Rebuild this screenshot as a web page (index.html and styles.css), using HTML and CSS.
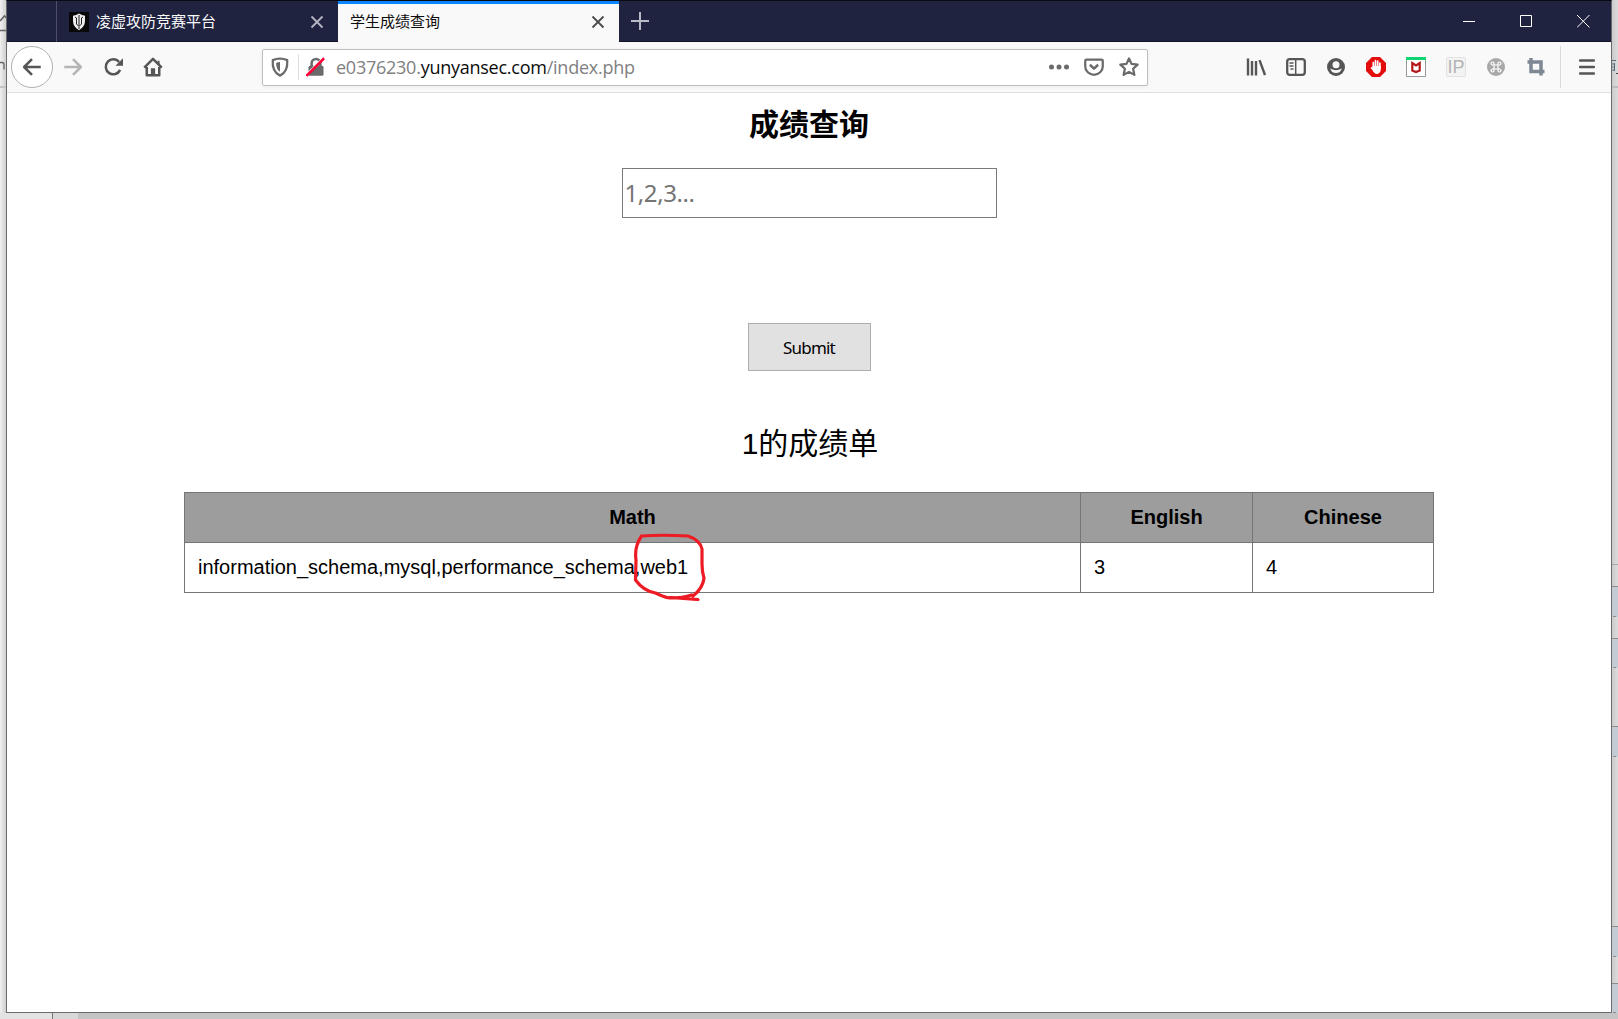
FILE: index.html
```html
<!DOCTYPE html>
<html lang="zh-CN">
<head>
    <meta charset="UTF-8">
    <meta name="viewport" content="width=device-width, initial-scale=1.0">
    <title>学生成绩查询</title>
    <link rel="stylesheet" href="styles.css">
</head>
<body>
    <!-- windows behind the browser -->
    <div class="behind behind-left">
        <svg width="6" height="100" viewBox="0 0 6 100">
            <path d="M0 21l4.500-5 2 2M0 30.500h6" stroke="#666" stroke-width="1.600" fill="none"/>
            <path d="M0 62.500h2q2 0 2 2v5" stroke="#666" stroke-width="1.300" fill="none"/>
            <path d="M0 87h6" stroke="#c4c4c8" stroke-width="2"/>
        </svg>
    </div>
    <div class="behind behind-right">
        <svg width="6" height="1013" viewBox="0 0 6 1013">
            <path d="M0 60.500h4M0 64h2M0 67h2M0 70h2M2.500 63v8" stroke="#5b6c7c" fill="none"/>
            <path d="M4 73.500h2" stroke="#444"/>
            <path d="M0 87h6" stroke="#bcbcc0" stroke-width="2"/>
            <path d="M0 587h6v30H0zM0 639h6v29H0zM0 727h6v30H0zM0 927h6v30H0zM0 984h6v29H0z" fill="#c3ccd5"/>
            <path d="M0 586.500h6M0 638.500h6M0 726.500h6M0 926.500h6M0 983.500h6" stroke="#8d8d8d"/>
            <path d="M1 616.500h3M1 667.500h3M1 756.500h3M1 956.500h3M1 1012.500h3" stroke="#8d8d8d"/>
            <path d="M0 564.500h6" stroke="#aaa"/>
        </svg>
    </div>
    <div class="behind behind-bottom"></div>

    <div class="window">
        <div class="titlebar">
            <div class="tab">
                <svg class="favicon" width="20" height="20" viewBox="0 0 20 20">
                    <path d="M0 0h20v20H0z" fill="#080808"/>
                    <path d="M10 1.500q3 2 6 2.200v5q0 6-6 9.500q-6-3.500-6-9.500v-5q3-.2 6-2.200z" fill="#eee"/>
                    <path d="M10 3v14M7.500 6v6l2 2M12.500 6v6l-2 2M6 5l2 1.500M14 5l-2 1.500" stroke="#222" fill="none"/>
                </svg>
                <span class="tab-title">凌虚攻防竞赛平台</span>
                <svg class="tab-close" width="14" height="14" viewBox="0 0 14 14"><path d="M1.500 1.500l11 11M12.500 1.500l-11 11"/></svg>
            </div>
            <div class="tab active">
                <span class="tab-title">学生成绩查询</span>
                <svg class="tab-close" width="14" height="14" viewBox="0 0 14 14"><path d="M1.500 1.500l11 11M12.500 1.500l-11 11"/></svg>
            </div>
            <svg class="new-tab" width="18" height="18" viewBox="0 0 18 18"><path d="M9 0v18M0 9h18"/></svg>
            <div class="window-controls">
                <svg width="13" height="13" viewBox="0 0 13 13"><path d="M0 6.500h12"/></svg>
                <svg width="13" height="13" viewBox="0 0 13 13"><path d="M.5.5h11v11H.5z"/></svg>
                <svg width="13" height="13" viewBox="0 0 13 13"><path d="M0 0l12.500 12.500M12.500 0L0 12.500"/></svg>
            </div>
        </div>

        <div class="toolbar">
            <div class="nav">
                <div class="back">
                    <svg class="icon" width="20" height="20" viewBox="0 0 16 16"><path d="M15 8H2M8 1.700L1.700 8 8 14.300"/></svg>
                </div>
                <svg class="icon disabled" width="20" height="20" viewBox="0 0 16 16"><path d="M1 8h13M8 1.700L14.300 8 8 14.300"/></svg>
                <svg class="icon" width="20" height="20" viewBox="0 0 16 16"><path d="M13.700 10.300A6 6 0 1 1 12.800 4"/><path class="fill" d="M16 1v6H10z"/></svg>
                <svg class="icon" width="20" height="20" viewBox="0 0 16 16"><path d="M1 8.500L8 1.500l7 7M3 8v6.500h10V8"/><path class="fill" d="M6.300 9h3.400v5.500H6.300z"/><path d="M12.500 3v3" stroke-width="1.500"/></svg>
            </div>

            <div class="urlbar">
                <svg class="icon" width="20" height="20" viewBox="0 0 16 16"><path d="M8 1.200q3 .3 5.800 1.300Q14.500 12 8 14.900 1.500 12 2.200 2.500 5 1.500 8 1.200z" stroke-width="1.800"/><path class="fill" d="M8 4q-1.700.2-3.100.7Q5 10 8 11.800z"/></svg>
                <span class="divider"></span>
                <svg class="icon" width="20" height="20" viewBox="0 0 16 16"><path d="M4.500 8V5a3.500 3.500 0 0 1 7 0v3"/><rect class="fill" x="2" y="7" width="12" height="8" rx="1.200"/><path d="M0 14.500L14 .5" stroke="#fff" stroke-width="1.500"/><path d="M.5 15L14.500 1" stroke="#ff0039" stroke-width="2"/></svg>
                <span class="url">e0376230.<b>yunyansec.com</b>/index.php</span>
                <div class="page-actions">
                    <svg class="icon" width="20" height="20" viewBox="0 0 20 20"><g class="fill"><circle cx="2.500" cy="10" r="2.500"/><circle cx="10" cy="10" r="2.500"/><circle cx="17.500" cy="10" r="2.500"/></g></svg>
                    <svg class="icon" width="20" height="20" viewBox="0 0 16 16"><path d="M2 2h12q1 0 1 1v4.500a7 6.700 0 0 1-14 0V3q0-1 1-1z" stroke-width="1.800"/><path d="M4.700 6.200L8 9.300l3.300-3.100" stroke-width="2"/></svg>
                    <svg class="icon" width="20" height="20" viewBox="0 0 16 16"><path d="M8 1.200l2 4.300 4.900.6-3.600 3.300 1 4.900L8 11.900l-4.300 2.400 1-4.900L1.100 6.100 6 5.500z" stroke-width="1.800"/></svg>
                </div>
            </div>

            <div class="extensions">
                <svg class="icon" width="20" height="20" viewBox="0 0 20 20"><path d="M2 1.500v17M6 4v14.500M10 4v14.500M13.500 3.200l5.500 14.800" stroke-width="2.400"/></svg>
                <svg class="icon" width="20" height="20" viewBox="0 0 20 20"><rect x="1.200" y="2.200" width="17.600" height="15.600" rx="2.500" stroke-width="2.300"/><path d="M9.700 2v16" stroke-width="1.500"/><path d="M3.500 6h4M3.500 9h4M4.500 12h3" stroke-width="1.300"/></svg>
                <svg class="icon" width="20" height="20" viewBox="0 0 20 20"><circle class="fill" cx="10" cy="10" r="9"/><circle cx="10" cy="7.800" r="3.500" fill="#f9f9fa" stroke="none"/><path d="M4.300 11.500Q10 15 15.700 11.500 14.500 16 10 16T4.300 11.500z" fill="#f9f9fa" stroke="none"/></svg>
                <svg width="20" height="20" viewBox="0 0 20 20"><path d="M6 0h8l6 6v8l-6 6H6l-6-6V6z" fill="#e40d0d"/><path d="M7.300 10V5.500M9.500 9V3.700M11.700 9V4.200M13.900 11V6M5.500 11l3 3" stroke="#fff" stroke-width="1.700" stroke-linecap="round"/><path d="M6.500 9h8.300v3q0 4-3.500 5-3 .2-4.800-4z" fill="#fff"/></svg>
                <svg width="20" height="20" viewBox="0 0 20 20"><path d="M.5.5h19v19H.5z" fill="#fff" stroke="#999"/><path d="M0 0h20v3H0z" fill="#0cd66d"/><path d="M6.300 6v7.500L10 15l3.700-1.500V6L10 8.500z" fill="none" stroke="#b5171b" stroke-width="2.200"/></svg>
                <span class="ext-ip">IP</span>
                <svg width="20" height="20" viewBox="0 0 20 20"><circle cx="10" cy="10" r="9" fill="#a8a8a8"/><path d="M8 8h4v4H8zM8 8H6.500A1.500 1.500 0 1 1 8 6.500zM12 8V6.500A1.500 1.500 0 1 1 13.500 8zM12 12h1.500a1.500 1.500 0 1 1-1.500 1.500zM8 12v1.500A1.500 1.500 0 1 1 6.500 12z" fill="none" stroke="#fff" stroke-width="1.200"/></svg>
                <svg width="20" height="20" viewBox="0 0 20 20"><path d="M5 1v13.500h13.500M1.500 5h13.500v13.500" fill="none" stroke="#7d8894" stroke-width="3.500"/></svg>
            </div>
            <div class="menu">
                <svg class="icon" width="16" height="16" viewBox="0 0 16 16"><path d="M1 1.500h14M1 8h14M1 14.500h14" stroke-width="2.300" stroke-linecap="round"/></svg>
            </div>
        </div>

        <div class="page">
            <h2>成绩查询</h2>
            <form class="query">
                <input type="text" name="id" placeholder="1,2,3...">
                <input type="submit" value="Submit">
            </form>
            <p class="caption">1的成绩单</p>
            <table>
                <tr>
                    <th class="math">Math</th>
                    <th class="english">English</th>
                    <th>Chinese</th>
                </tr>
                <tr>
                    <td>information_schema,mysql,performance_schema,<span class="marked">web1<svg class="pen" width="76" height="70" viewBox="0 0 76 70"><path d="M9.500 5Q30 3.500 56 5 68 9 70 18v15q0 8 2 14-1 10-11 18M9.500 5Q2 16 4 29L3.500 49q8 11 20 13 8 4 14 5 14 0 22-3M38 66.500l28 2"/></svg></span></td>
                    <td>3</td>
                    <td>4</td>
                </tr>
            </table>
        </div>
    </div>
</body>
</html>
```
FILE: styles.css
```css
* {
    box-sizing: border-box;
}

body {
    margin: 0;
    height: 1019px;
    display: grid;
    grid-template-columns: 6px 1606px 6px;
    grid-template-rows: 1013px 6px;
    overflow: hidden;
    background: #d8d8d8;
    font-family: "Liberation Sans", "Noto Sans CJK SC", sans-serif;
}

.behind-left {
    background: linear-gradient(90deg, #f0f0f0, #cfcfcf);
}

.behind-right {
    grid-column: 3;
    background: linear-gradient(90deg, #cbcbcb, #dcdcdc);
}

.behind svg {
    display: block;
}

.behind-bottom {
    grid-row: 2;
    grid-column: 1 / 4;
    background: linear-gradient(90deg, #e3e3e3 52px, #777 52px, #777 53px, #d8d8d8 53px, #d8d8d8 78px, #c4c4c4 78px);
}

.window {
    grid-row: 1;
    grid-column: 2;
    display: flex;
    flex-direction: column;
    border: 1px solid #6b6b6e;
    border-top-color: #0a0a14;
    background: #fff;
}

/* tabs */
.titlebar {
    height: 41px;
    padding-left: 49px;
    display: flex;
    background: #202340;
    box-shadow: inset 0 -1px #111326;
}

.tab {
    width: 282px;
    padding: 0 14px 0 12px;
    display: flex;
    align-items: center;
    border-left: 1px solid #4d4f66;
    color: #f9f9fa;
    font: 15px "Noto Sans CJK SC", sans-serif;
}

.tab.active {
    width: 281px;
    border-left: 0;
    border-top: 3px solid #0a84ff;
    padding-bottom: 3px;
    background: #f9f9fa;
    color: #0c0c0d;
}

.tab-title {
    margin-bottom: 2px;
}

.favicon {
    margin-right: 7px;
}

.tab-close {
    margin-left: auto;
    fill: none;
    stroke: #b5b6c2;
    stroke-width: 1.8;
}

.active .tab-close {
    stroke: #4a4a4b;
}

.new-tab {
    margin: 11px 0 0 12px;
    stroke: #b9bac5;
    stroke-width: 2;
}

.window-controls {
    margin: 14px 21px 0 auto;
    display: flex;
    gap: 44px;
}

.window-controls svg {
    fill: none;
    stroke: #fff;
}

/* toolbar */
.toolbar {
    height: 51px;
    display: flex;
    align-items: center;
    border-bottom: 1px solid #e0e0e1;
    background: #f9f9fa;
}

.icon {
    fill: none;
    stroke: #565657;
    stroke-width: 2;
    stroke-linejoin: round;
}

.icon .fill {
    fill: #565657;
    stroke: none;
}

.icon.disabled {
    stroke: #b5b5b6;
}

.nav {
    width: 255px;
    padding-left: 4px;
    display: flex;
    align-items: center;
    gap: 20px;
}

.back {
    width: 42px;
    height: 42px;
    margin-right: -10px;
    display: flex;
    align-items: center;
    justify-content: center;
    border: 1px solid #b1b1b2;
    border-radius: 50%;
    background: #fff;
}

.urlbar {
    width: 886px;
    height: 37px;
    padding: 0 8px 0 7px;
    display: flex;
    align-items: center;
    border: 1px solid #bebebf;
    border-radius: 2px;
    background: #fff;
    box-shadow: 0 1px 4px rgba(0, 0, 0, 0.05);
}

.urlbar .icon {
    stroke: #6a6a6b;
}

.urlbar .fill {
    fill: #6a6a6b;
}

.divider {
    width: 1px;
    height: 26px;
    margin: 0 7px 0 8px;
    background: #dededf;
}

.url {
    margin-left: 10px;
    color: #808081;
    font: 18px "Open Sans", sans-serif;
    letter-spacing: -0.25px;
}

.url b {
    color: #0c0c0d;
    font-weight: normal;
}

.page-actions {
    margin-left: auto;
    display: flex;
    gap: 15px;
}

.extensions {
    margin-left: 98px;
    display: flex;
    gap: 20px;
}

.ext-ip {
    width: 20px;
    height: 20px;
    border: 1px solid #e2e2e2;
    border-radius: 2px;
    background: #f3f3f3;
    color: #b4b4b4;
    font-size: 18px;
    line-height: 19px;
    text-align: center;
}

.menu {
    height: 42px;
    margin-left: 14px;
    padding-left: 18px;
    display: flex;
    align-items: center;
    border-left: 1px solid #d9d9da;
}

/* page */
.page {
    display: flex;
    flex-direction: column;
    align-items: center;
}

h2 {
    margin: 10px 0 0;
    font-size: 30px;
    line-height: 44px;
}

.query {
    display: flex;
    flex-direction: column;
    align-items: center;
}

input[type=text] {
    width: 375px;
    height: 50px;
    margin-top: 21px;
    padding: 0 2px 2px;
    border: 1px solid #7a7a7a;
    font: 24px "Noto Sans", sans-serif;
    letter-spacing: -0.4px;
}

input[type=text]::placeholder {
    color: #757575;
}

input[type=submit] {
    width: 123px;
    height: 48px;
    margin-top: 105px;
    border: 1px solid #adadad;
    background: #e1e1e1;
    color: #000;
    font: 17px "Noto Sans", sans-serif;
    letter-spacing: -0.8px;
}

.caption {
    margin: 51px 0 0 2px;
    font-size: 30px;
    line-height: 44px;
}

table {
    width: 1250px;
    margin-top: 26px;
    border-collapse: collapse;
    table-layout: fixed;
    font-size: 20px;
}

th, td {
    height: 50px;
    padding: 0 13px;
    border: 1px solid #757575;
    text-align: left;
}

th {
    background: #9d9d9d;
    text-align: center;
}

.math {
    width: 896px;
}

.english {
    width: 172px;
}

/* red pen circle drawn over the database name */
.marked {
    position: relative;
}

.pen {
    position: absolute;
    left: -8px;
    top: -25px;
    fill: none;
    stroke: #ed1c24;
    stroke-width: 3.2;
    stroke-linecap: round;
    stroke-linejoin: round;
}
```
